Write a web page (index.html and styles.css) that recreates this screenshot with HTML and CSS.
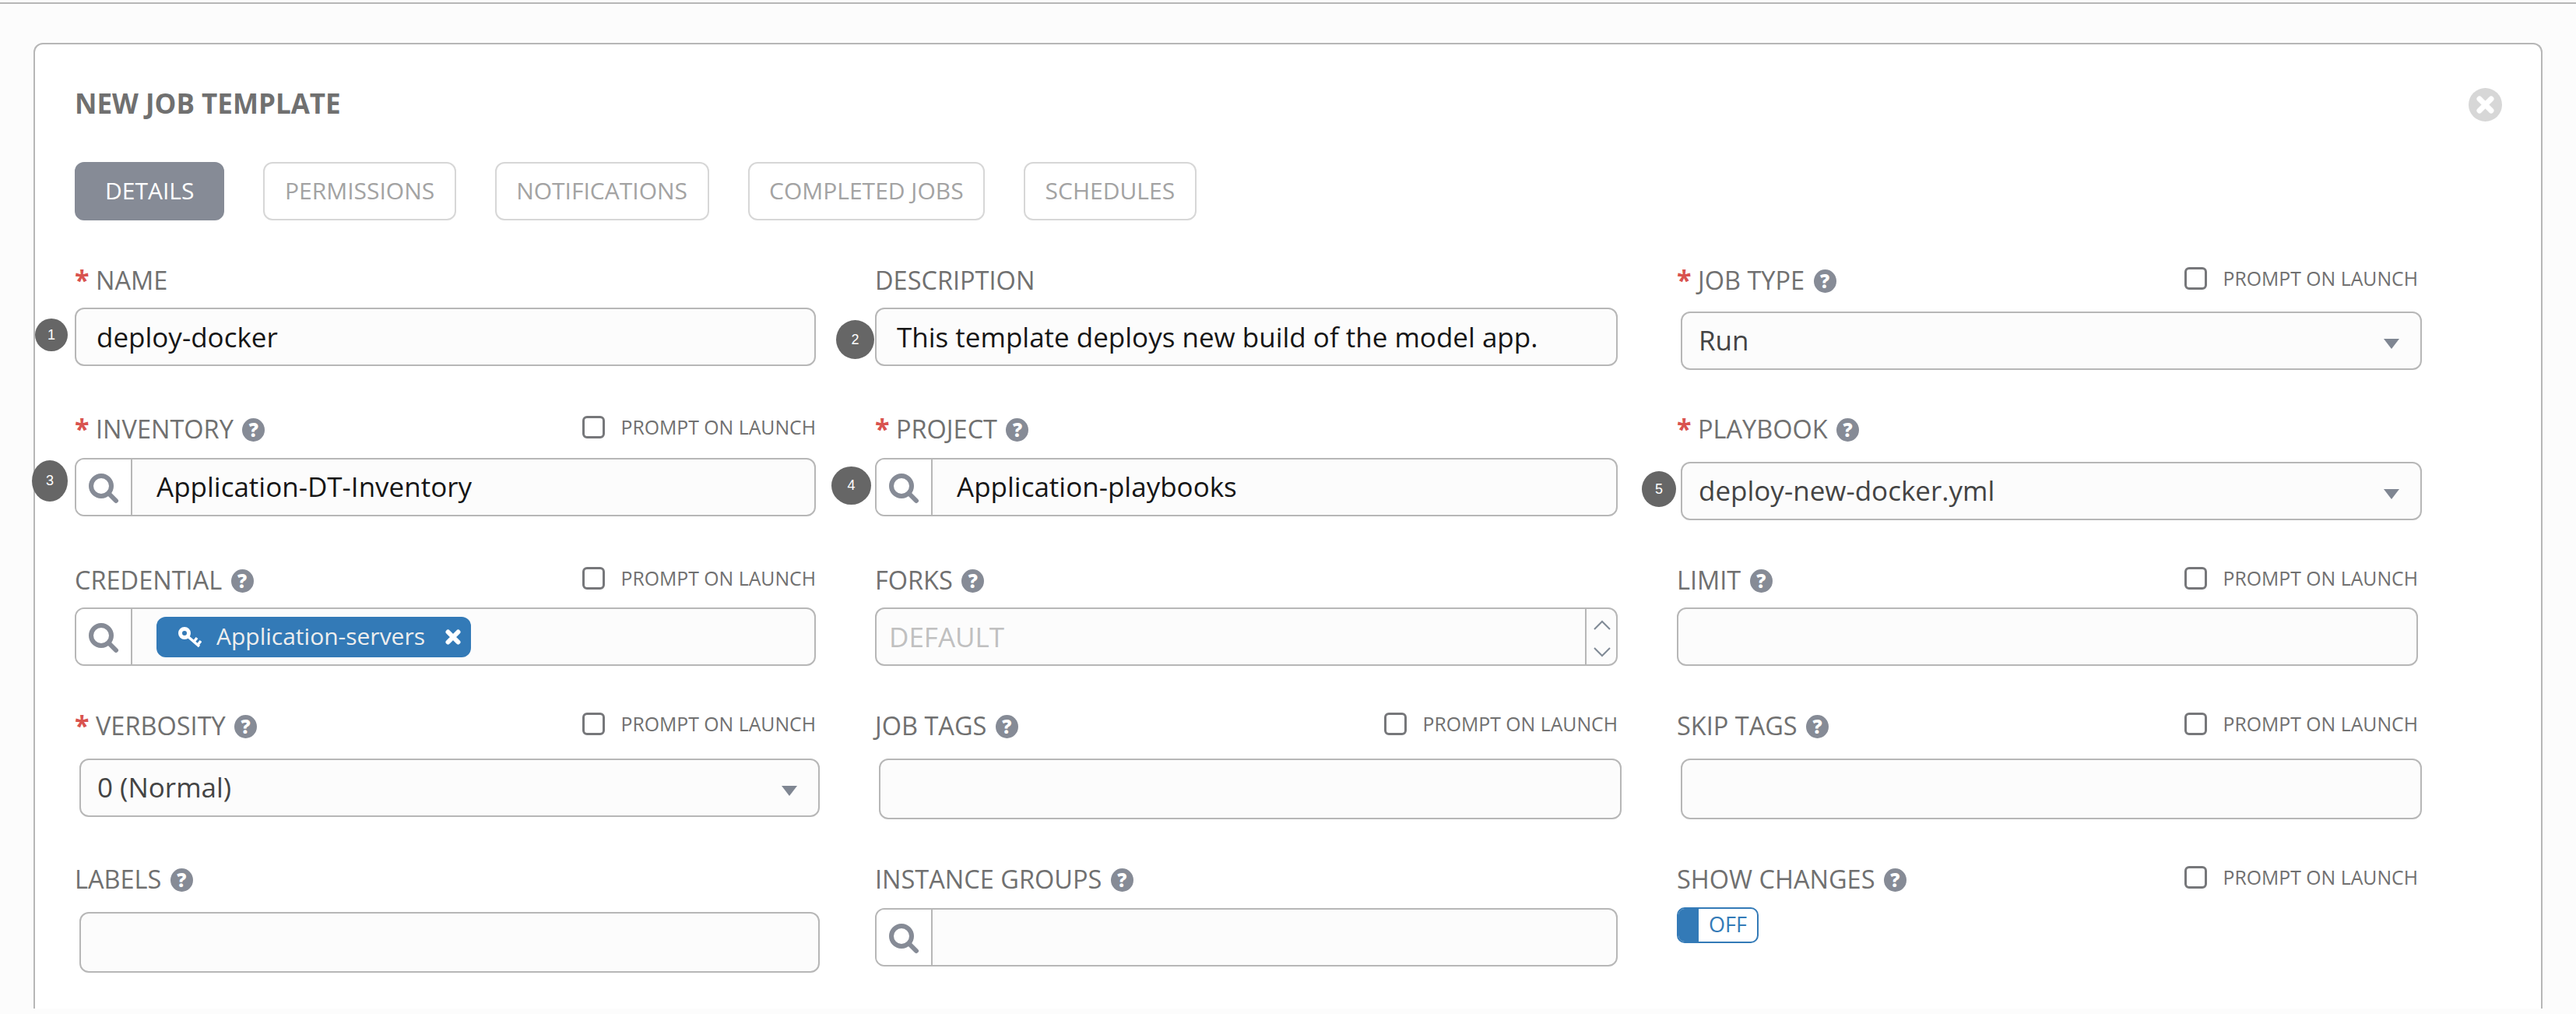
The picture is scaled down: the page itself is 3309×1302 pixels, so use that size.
FILE: index.html
```html
<!DOCTYPE html>
<html lang="en-US">
<head>
	<meta charset="UTF-8">
	<title>New Job Template</title>
	<link rel="stylesheet" href="styles.css">
</head>
<body>
<div class="topline"></div>
<div class="card">
	<svg class="close" width="43" height="43" viewBox="0 0 43 43"><circle cx="21.5" cy="21.5" r="21.5" fill="#d7d7d7"/><path d="M14 14L29 29M29 14L14 29" stroke="#fff" stroke-width="7" stroke-linecap="round"/></svg>
	<h1 class="title">NEW JOB TEMPLATE</h1>
	<div class="tabs">
		<a class="tab active">DETAILS</a>
		<a class="tab">PERMISSIONS</a>
		<a class="tab">NOTIFICATIONS</a>
		<a class="tab">COMPLETED JOBS</a>
		<a class="tab">SCHEDULES</a>
	</div>
	<div class="form">
		<!-- row 1 -->
		<div class="field">
			<div class="head"><label><b>*</b> NAME</label></div>
			<div class="ctl mt15"><span class="step s1">1</span><span class="val">deploy-docker</span></div>
		</div>
		<div class="field">
			<div class="head"><label>DESCRIPTION</label></div>
			<div class="ctl mt15"><span class="step s2">2</span><span class="val">This template deploys new build of the model app.</span></div>
		</div>
		<div class="field">
			<div class="head"><label><b>*</b> JOB TYPE <i class="help">?</i></label><span class="prompt"><i class="check"></i>PROMPT ON LAUNCH</span></div>
			<div class="ctl select mt20 ml5"><span class="val">Run</span><i class="arrow"></i></div>
		</div>
		<!-- row 2 -->
		<div class="field">
			<div class="head"><label><b>*</b> INVENTORY <i class="help">?</i></label><span class="prompt"><i class="check"></i>PROMPT ON LAUNCH</span></div>
			<div class="ctl lookup mt17"><span class="step s3">3</span>
				<span class="addon"><svg width="40" height="40" viewBox="0 0 40 40"><circle cx="17" cy="17" r="13" fill="none" stroke="#868b96" stroke-width="6"/><path d="M27 27L36 36" stroke="#868b96" stroke-width="6" stroke-linecap="round"/></svg></span>
				<span class="val">Application-DT-Inventory</span></div>
		</div>
		<div class="field">
			<div class="head"><label><b>*</b> PROJECT <i class="help">?</i></label></div>
			<div class="ctl lookup mt17"><span class="step s4">4</span>
				<span class="addon"><svg width="40" height="40" viewBox="0 0 40 40"><circle cx="17" cy="17" r="13" fill="none" stroke="#868b96" stroke-width="6"/><path d="M27 27L36 36" stroke="#868b96" stroke-width="6" stroke-linecap="round"/></svg></span>
				<span class="val">Application-playbooks</span></div>
		</div>
		<div class="field">
			<div class="head"><label><b>*</b> PLAYBOOK <i class="help">?</i></label></div>
			<div class="ctl select mt22 ml5"><span class="step s5">5</span><span class="val">deploy-new-docker.yml</span><i class="arrow"></i></div>
		</div>
		<!-- row 3 -->
		<div class="field">
			<div class="head"><label>CREDENTIAL <i class="help">?</i></label><span class="prompt"><i class="check"></i>PROMPT ON LAUNCH</span></div>
			<div class="ctl lookup mt15">
				<span class="addon"><svg width="40" height="40" viewBox="0 0 40 40"><circle cx="17" cy="17" r="13" fill="none" stroke="#868b96" stroke-width="6"/><path d="M27 27L36 36" stroke="#868b96" stroke-width="6" stroke-linecap="round"/></svg></span>
				<span class="tag">
					<svg width="30" height="28" viewBox="0 0 30 28"><circle cx="8" cy="9" r="5.5" fill="none" stroke="#fff" stroke-width="5"/><path d="M12 13L27 26M20 20L24 15M25 24L29 19" fill="none" stroke="#fff" stroke-width="3.5"/></svg>
					<span class="tagname">Application-servers</span>
					<svg width="20" height="20" viewBox="0 0 20 20"><path d="M3.5 3.5L16.5 16.5M16.5 3.5L3.5 16.5" stroke="#fff" stroke-width="6" stroke-linecap="round"/></svg>
				</span>
			</div>
		</div>
		<div class="field">
			<div class="head"><label>FORKS <i class="help">?</i></label></div>
			<div class="ctl number mt15"><span class="placeholder">DEFAULT</span>
				<span class="spin"><svg width="38" height="71" viewBox="0 0 38 71"><path d="M10 26L20 16L30 26M10 50L20 60L30 50" fill="none" stroke="#808a96" stroke-width="2"/></svg></span>
			</div>
		</div>
		<div class="field">
			<div class="head"><label>LIMIT <i class="help">?</i></label><span class="prompt"><i class="check"></i>PROMPT ON LAUNCH</span></div>
			<div class="ctl mt15"></div>
		</div>
		<!-- row 4 -->
		<div class="field">
			<div class="head"><label><b>*</b> VERBOSITY <i class="help">?</i></label><span class="prompt"><i class="check"></i>PROMPT ON LAUNCH</span></div>
			<div class="ctl select mt22 ml6"><span class="val">0 (Normal)</span><i class="arrow"></i></div>
		</div>
		<div class="field">
			<div class="head"><label>JOB TAGS <i class="help">?</i></label><span class="prompt"><i class="check"></i>PROMPT ON LAUNCH</span></div>
			<div class="ctl tall mt22 ml5"></div>
		</div>
		<div class="field">
			<div class="head"><label>SKIP TAGS <i class="help">?</i></label><span class="prompt"><i class="check"></i>PROMPT ON LAUNCH</span></div>
			<div class="ctl tall mt22 ml5"></div>
		</div>
		<!-- row 5 -->
		<div class="field">
			<div class="head"><label>LABELS <i class="help">?</i></label></div>
			<div class="ctl tall mt22 ml6"></div>
		</div>
		<div class="field">
			<div class="head"><label>INSTANCE GROUPS <i class="help">?</i></label></div>
			<div class="ctl lookup mt17">
				<span class="addon"><svg width="40" height="40" viewBox="0 0 40 40"><circle cx="17" cy="17" r="13" fill="none" stroke="#868b96" stroke-width="6"/><path d="M27 27L36 36" stroke="#868b96" stroke-width="6" stroke-linecap="round"/></svg></span>
			</div>
		</div>
		<div class="field">
			<div class="head"><label>SHOW CHANGES <i class="help">?</i></label><span class="prompt"><i class="check"></i>PROMPT ON LAUNCH</span></div>
			<div class="toggle"><span class="knob"></span><span class="off">OFF</span></div>
		</div>
	</div>
</div>
</body>
</html>
```

FILE: styles.css
```css
*{
	padding:0;
	margin:0;
	box-sizing:border-box;
}
html,body{
	height:1302px;
	overflow:hidden;
}
body{
	background:#fcfcfc;
	font-family:"Open Sans",sans-serif;
}
i{
	font-style:normal;
}
.topline{
	height:2px;
	margin-top:3px;
	background:#b7b7b7;
}
.card{
	position:relative;
	width:3223px;
	height:1240px;
	margin:50px 0 0 43px;
	padding:56px 0 0 51px;
	background:#fff;
	border:2px solid #b7b7b7;
	border-bottom:0;
	border-radius:12px 12px 0 0;
}
.close{
	position:absolute;
	top:56px;
	right:50px;
}
.title{
	height:40px;
	font-size:35px;
	line-height:40px;
	font-weight:700;
	color:#707070;
}
/* tabs */
.tabs{
	display:flex;
	gap:50px;
	margin-top:55px;
}
.tab{
	height:75px;
	padding:0 25.5px;
	font-size:30px;
	line-height:69px;
	color:#a3a3a3;
	border:2px solid #d7d7d7;
	border-radius:12px;
}
.tab.active{
	padding:0 37px;
	color:#fff;
	background:#868b96;
	border-color:#868b96;
}
/* form */
.form{
	display:grid;
	grid-template-columns:952px 954px 952px;
	grid-template-rows:191px 194px 187px 197px 150px;
	column-gap:76px;
	margin-top:57px;
}
.head{
	display:flex;
	justify-content:space-between;
	align-items:center;
	height:40px;
}
label{
	font-size:32.5px;
	line-height:40px;
	color:#707070;
	white-space:nowrap;
}
label b{
	font-size:34px;
	font-weight:700;
	line-height:30px;
	color:#d9534f;
}
.help{
	display:inline-block;
	width:29px;
	height:30px;
	margin-left:3px;
	font-size:24px;
	font-weight:800;
	line-height:30px;
	text-align:center;
	vertical-align:2px;
	color:#fff;
	background:#868b96;
	border-radius:50%;
}
.prompt{
	display:flex;
	align-items:center;
	margin-top:-7px;
	font-size:24.8px;
	color:#707070;
}
.check{
	width:29px;
	height:29px;
	margin:2px 21px 0 0;
	background:#fff;
	border:3px solid #76777a;
	border-radius:6px;
}
.ctl{
	position:relative;
	display:flex;
	align-items:center;
	height:75px;
	background:#fcfcfc;
	border:2px solid #b7b7b7;
	border-radius:12px;
}
.tall{
	height:78px;
}
.mt15{ margin-top:15px; }
.mt17{ margin-top:17px; }
.mt20{ margin-top:20px; }
.mt22{ margin-top:22px; }
.ml5{ margin-left:5px; margin-right:-5px; }
.ml6{ margin-left:6px; margin-right:-5px; }
.val{
	padding-left:26px;
	font-size:35px;
	color:#161616;
	white-space:nowrap;
}
.select .val{
	padding:0 0 2px 21px;
	color:#444;
}
.arrow{
	position:absolute;
	right:27px;
	top:33px;
	border-top:13px solid #7f8692;
	border-left:10px solid transparent;
	border-right:10px solid transparent;
}
/* lookup with search button */
.addon{
	flex:none;
	display:flex;
	align-items:center;
	justify-content:center;
	width:72px;
	height:100%;
	padding-top:2px;
	background:#fff;
	border-right:2px solid #b7b7b7;
	border-radius:10px 0 0 10px;
}
.lookup .val{
	padding:0 0 2px 31px;
}
.tag{
	display:flex;
	align-items:center;
	height:52px;
	margin-left:31px;
	padding:0 13px 0 28px;
	color:#eee;
	background:#337ab7;
	border-radius:12px;
}
.tagname{
	margin:0 26px 2px 19px;
	font-size:30px;
	white-space:nowrap;
}
.number{
	justify-content:space-between;
}
.placeholder{
	padding-left:16px;
	font-size:35px;
	color:#c0c0c0;
}
.spin{
	height:100%;
	border-left:2px solid #b7b7b7;
}
/* toggle */
.toggle{
	display:flex;
	width:105px;
	height:46px;
	margin-top:16px;
	border:2px solid #337ab7;
	border-radius:10px;
	overflow:hidden;
}
.knob{
	width:26px;
	background:#337ab7;
}
.off{
	flex:1;
	font-size:27px;
	line-height:40px;
	text-align:center;
	color:#337ab7;
}
/* numbered callouts on top of the form */
.step{
	position:absolute;
	display:flex;
	align-items:center;
	justify-content:center;
	font-family:"Liberation Sans",sans-serif;
	font-size:18px;
	color:#fff;
	background:#666;
	border-radius:50%;
}
.s1{ left:-53px; top:12px; width:42px; height:42px; }
.s2{ left:-52px; top:14px; width:49px; height:50px; }
.s3{ left:-57px; top:1px; width:46px; height:53px; }
.s4{ left:-58px; top:9px; width:51px; height:49px; }
.s5{ left:-52px; top:10px; width:44px; height:46px; }
```
